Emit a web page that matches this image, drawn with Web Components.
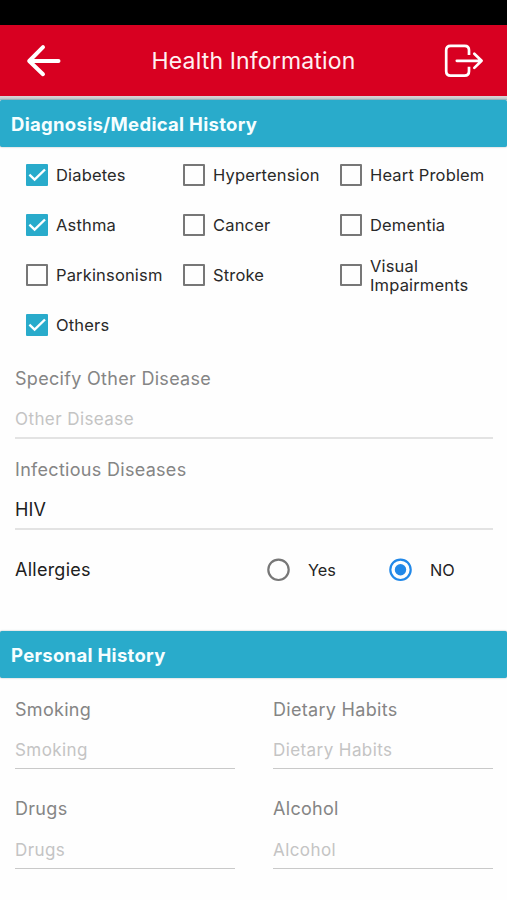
<!DOCTYPE html>
<html lang="en">
<head>
<meta charset="utf-8">
<title>Health Information</title>
<style>
html,body{margin:0;height:100%;overflow:hidden;background:#fefefe}
body{font-family:Inter,"Liberation Sans",sans-serif;color:#262626}
</style>
</head>
<body>
<health-screen></health-screen>
<script>
const define = (name, html, setup) => customElements.define(name, class extends HTMLElement {
  constructor() {
    super();
    this.attachShadow({ mode: 'open' }).innerHTML = html;
  }
  connectedCallback() { if (setup) setup(this, this.shadowRoot); }
});

define('app-header', `
<style>
:host{display:block}
.status{height:25px;background:#000}
.bar{box-sizing:border-box;height:71px;background:#d80021;display:grid;grid-template-columns:60px 1fr 60px;align-items:center;padding:0 15px}
h1{margin:0;font-size:23px;font-weight:400;line-height:30px;letter-spacing:.15px;color:#fff0f1;text-align:center;white-space:nowrap}
svg{display:block;fill:none;stroke:#fff;stroke-linecap:round;stroke-linejoin:round}
.exit{justify-self:end}
.shade{height:4px;background:linear-gradient(#dcd5d8,#c6c9cc 65%,#8fb9c6)}
</style>
<div class="status"></div>
<div class="bar">
  <svg width="60" height="40" viewBox="15 41 60 40" stroke-width="4"><path d="M58.5 61H29.5M43 47.2L29.2 61L43 74.2"/></svg>
  <h1><slot></slot></h1>
  <svg class="exit" width="60" height="40" viewBox="432 41 60 40" stroke-width="2.7"><path stroke-linecap="butt" d="M469 55V50.2Q469 45.8 464.6 45.8H450.6Q446.2 45.8 446.2 50.2V71.2Q446.2 75.6 450.6 75.6H464.6Q469 75.6 469 71.2V66.8"/><path d="M456.8 60.8H481.6M474.3 53.7L481.6 60.8L474.3 67.9"/></svg>
</div>
<div class="shade"></div>`);

define('section-title', `
<style>
:host{display:block;height:46.6px;box-sizing:border-box;padding-left:11px;background:#29abcb;border-radius:2px;box-shadow:0 0 1.5px rgba(60,80,90,.6);color:#f6feff;font-size:18.5px;font-weight:700;letter-spacing:.3px;line-height:48.4px}
</style><slot></slot>`);

define('check-item', `
<style>
:host{display:flex;align-items:center;gap:8px;height:50px;font-size:16.5px;line-height:19.5px;letter-spacing:.16px;color:#292929}
.box{box-sizing:border-box;width:22px;height:22px;flex:none;border:2px solid #777;border-radius:1px}
.text{margin-top:2px}
:host([checked]) .box{border-color:#29abcb;background:#29abcb}
svg{display:none;width:18px;height:18px;fill:none;stroke:#fff;stroke-width:2.4}
:host([checked]) svg{display:block}
</style>
<span class="box"><svg viewBox="2 2 18 18"><path d="M3.4 10.7L8.6 15.7L19 5.5"/></svg></span><span class="text"><slot></slot></span>`);

define('check-grid', `
<style>
:host{display:grid;grid-template-columns:157px 157px 150px;padding:3.6px 0 0 26px}
</style><slot></slot>`);

define('text-field', `
<style>
:host{display:block;border-bottom:var(--rule,2px solid #e3e3e3);white-space:nowrap}
.label{font-size:18px;line-height:24px;letter-spacing:.3px;color:#858585}
.value{font-size:17px;line-height:24px;letter-spacing:.42px;color:#c4c4c4;margin-top:16.3px;height:30px}
:host([filled]) .value{color:#202020;font-size:18px;letter-spacing:.2px}
</style>
<div class="label"></div><div class="value"><slot></slot></div>`,
(el, root) => { root.querySelector('.label').textContent = el.getAttribute('label'); });

define('radio-item', `
<style>
:host{display:flex;align-items:center;gap:17px;font-size:16.3px;line-height:24px;color:#242424}
svg{display:block;width:24px;height:24px;fill:none;stroke:#777;stroke-width:2.2}
.dot{display:none;fill:#2188e8;stroke:none}
:host([selected]) svg{stroke:#2188e8}
:host([selected]) .dot{display:block}
</style>
<svg viewBox="0 0 24 24"><circle cx="11.5" cy="11.8" r="10.2"/><circle class="dot" cx="11.5" cy="11.8" r="5.7"/></svg><slot></slot>`);

define('choice-row', `
<style>
:host{display:grid;grid-template-columns:252px 122px auto;justify-content:start;align-items:center;height:24px}
.name{font-size:18px;line-height:24px;letter-spacing:.25px;color:#202020;padding-top:1px}
</style>
<span class="name"></span><slot></slot>`,
(el, root) => { root.querySelector('.name').textContent = el.getAttribute('label'); });

define('health-screen', `
<style>
:host{display:block;width:507px;height:900px;overflow:hidden;background:#fefefe}
.fields{display:grid;row-gap:18.4px;padding:16.8px 14px 0 15px}
choice-row{margin-top:8.8px}
.history{margin-top:49.9px}
.pairs{display:grid;grid-template-columns:220px 220px;column-gap:38px;row-gap:27.9px;padding:20.5px 14px 0 15px;--rule:1px solid #c9c9c9}
</style>
<app-header>Health Information</app-header>
<section-title>Diagnosis/Medical History</section-title>
<check-grid>
  <check-item checked>Diabetes</check-item><check-item>Hypertension</check-item><check-item>Heart Problem</check-item>
  <check-item checked>Asthma</check-item><check-item>Cancer</check-item><check-item>Dementia</check-item>
  <check-item>Parkinsonism</check-item><check-item>Stroke</check-item><check-item>Visual Impairments</check-item>
  <check-item checked>Others</check-item>
</check-grid>
<div class="fields">
  <text-field label="Specify Other Disease">Other Disease</text-field>
  <text-field label="Infectious Diseases" filled>HIV</text-field>
  <choice-row label="Allergies"><radio-item>Yes</radio-item><radio-item selected>NO</radio-item></choice-row>
</div>
<section-title class="history">Personal History</section-title>
<div class="pairs">
  <text-field label="Smoking">Smoking</text-field><text-field label="Dietary Habits">Dietary Habits</text-field>
  <text-field label="Drugs">Drugs</text-field><text-field label="Alcohol">Alcohol</text-field>
</div>`);
</script>
</body>
</html>
